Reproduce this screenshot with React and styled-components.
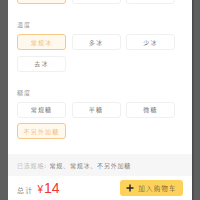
import React from 'react';
import styled, { createGlobalStyle } from 'styled-components';

const GlobalStyle = createGlobalStyle`
  html, body {
    margin: 0;
    padding: 0;
    background: #5f5f5f;
    font-family: "Noto Sans CJK SC", "Noto Sans", sans-serif;
  }
`;

// the first group is scrolled almost out of view: only the bottom edge of its buttons shows
const sections = [
  { title: null, options: ['', '', ''], selected: 0 },
  { title: '温度', options: ['常规冰', '多冰', '少冰', '去冰'], selected: 0 },
  { title: '糖度', options: ['常规糖', '半糖', '微糖', '不另外加糖'], selected: 3 },
];

function App() {
  return (
    <>
      <GlobalStyle />
      <Sheet>
        <Body>
          {sections.map((section, i) => (
            <Section key={i} $first={i === 0}>
              {section.title && <Label>{section.title}</Label>}
              <OptionGrid>
                {section.options.map((opt, j) => (
                  <Option key={j} $active={j === section.selected}>
                    {opt}
                  </Option>
                ))}
              </OptionGrid>
            </Section>
          ))}
        </Body>
        <Summary>
          <SummaryLabel>已选规格:</SummaryLabel>
          <SummaryValue>常规、常规冰、不另外加糖</SummaryValue>
        </Summary>
        <Footer>
          <Total>
            <TotalLabel>总计</TotalLabel>
            <Currency>¥</Currency>
            <Price>14</Price>
          </Total>
          <CartButton>
            <svg width="8" height="8" viewBox="0 0 8 8">
              <path d="M4 0.5v7M0.5 4h7" stroke="#222" strokeWidth="1.4" />
            </svg>
            <span>加入购物车</span>
          </CartButton>
        </Footer>
      </Sheet>
    </>
  );
}

const Sheet = styled.div`
  margin: 0 8px;
  width: 184px;
  height: 200px;
  background: #ffffff;
  overflow: hidden;
  box-shadow: 1px 0 0 #4a4a4a, 2px 0 0 #525252;
`;

const Body = styled.div`
  padding: 0 9px;
`;

const Section = styled.div`
  margin-top: ${(p) => (p.$first ? '-12px' : '17px')};
`;

const Label = styled.div`
  font-size: 6px;
  line-height: 8px;
  color: #a0a0a0;
  letter-spacing: 1px;
  margin-bottom: 5px;
`;

const OptionGrid = styled.div`
  display: grid;
  grid-template-columns: repeat(3, 49px);
  column-gap: 5.5px;
  row-gap: 5.5px;
`;

const Option = styled.div`
  box-sizing: border-box;
  height: 16px;
  display: flex;
  align-items: center;
  justify-content: center;
  border-radius: 3px;
  font-size: 6px;
  font-weight: 300;
  letter-spacing: 1.2px;
  border: 1px solid ${(p) => (p.$active ? '#f8c888' : '#f0f0f0')};
  background: ${(p) => (p.$active ? '#fff8ec' : '#ffffff')};
  color: ${(p) => (p.$active ? '#f0a23a' : '#333333')};
`;

const Summary = styled.div`
  margin-top: 15px;
  height: 22px;
  background: #f6f6f6;
  display: flex;
  align-items: center;
  padding: 0 9px;
  font-size: 6px;
  font-weight: 300;
  letter-spacing: 0.8px;
`;

const SummaryLabel = styled.span`
  color: #a0a0a0;
  margin-right: 3px;
`;

const SummaryValue = styled.span`
  color: #444444;
`;

const Footer = styled.div`
  display: flex;
  align-items: center;
  justify-content: space-between;
  padding: 4px 9px;
`;

const Total = styled.div`
  display: flex;
  align-items: baseline;
  color: #f2352f;
`;

const TotalLabel = styled.span`
  font-size: 7px;
  font-weight: 300;
  letter-spacing: 1.2px;
  color: #333333;
  margin-right: 4px;
`;

const Currency = styled.span`
  font-family: "Liberation Sans", sans-serif;
  font-size: 10px;
`;

const Price = styled.span`
  font-family: "Liberation Sans", sans-serif;
  font-size: 14px;
  margin-left: 1px;
`;

const CartButton = styled.button`
  width: 63px;
  height: 16px;
  border: none;
  border-radius: 3px;
  background: #fdd25b;
  display: flex;
  align-items: center;
  justify-content: center;
  gap: 4px;
  padding: 0;
  font-family: "Noto Sans CJK SC", sans-serif;
  font-size: 6.5px;
  font-weight: 300;
  letter-spacing: 1.2px;
  color: #333333;
`;

export default App;
